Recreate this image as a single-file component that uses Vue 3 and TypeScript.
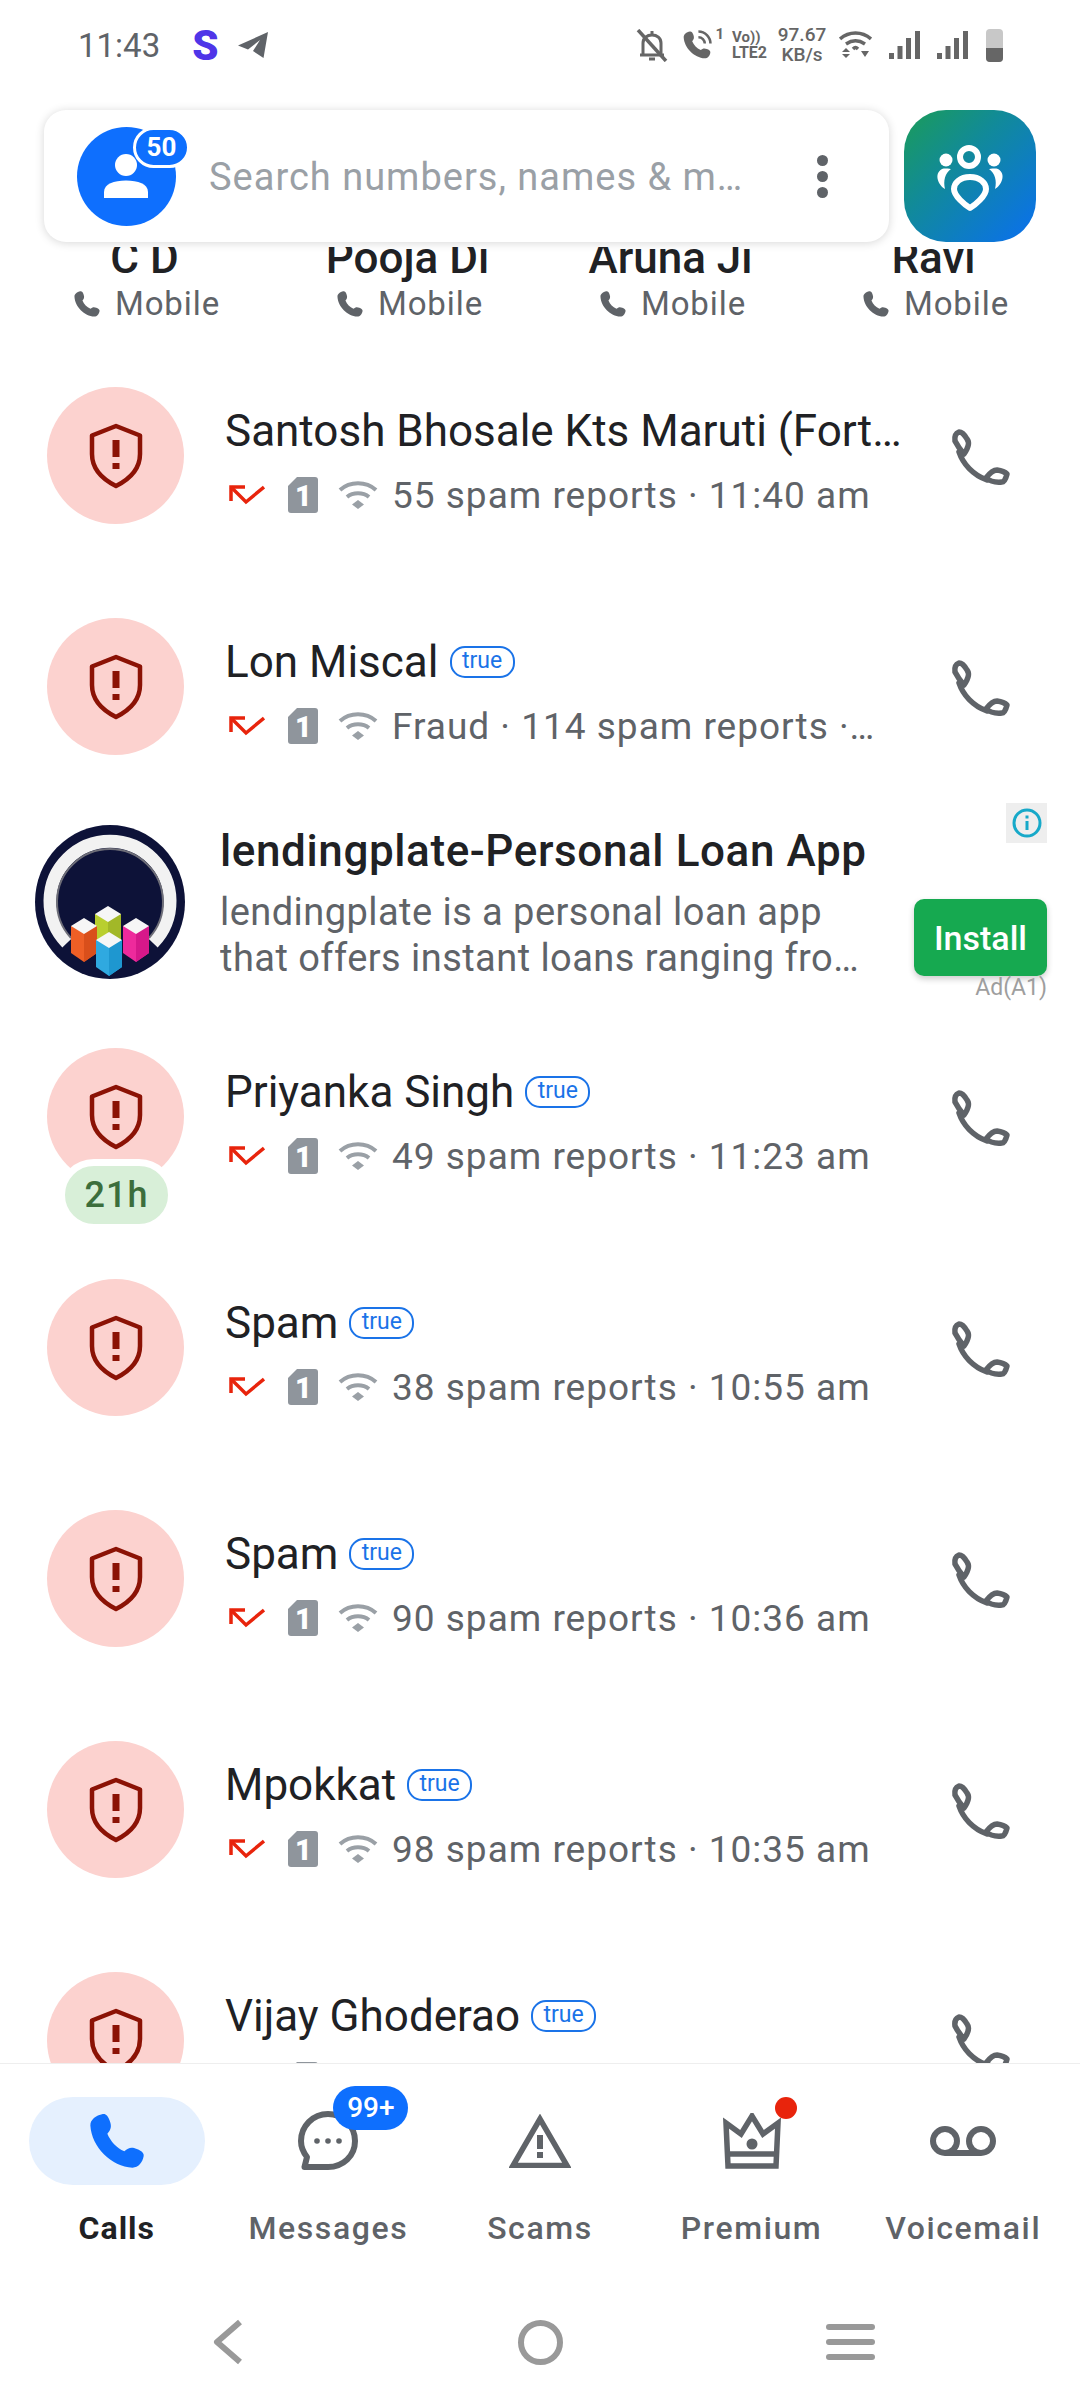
<script setup lang="ts">
interface Contact {
  name: string
}

interface CallRow {
  name: string
  detail: string
  verified?: boolean
  badge?: string
}

interface Tab {
  label: string
  active?: boolean
}

const contacts: Contact[] = [
  { name: "C D" },
  { name: "Pooja Di" },
  { name: "Aruna Ji" },
  { name: "Ravi" },
];

const topCalls: CallRow[] = [
  { name: "Santosh Bhosale Kts Maruti (Fortune Group)", detail: "55 spam reports · 11:40 am" },
  { name: "Lon Miscal", detail: "Fraud · 114 spam reports · 11:31 am", verified: true },
];

const restCalls: CallRow[] = [
  { name: "Priyanka Singh", detail: "49 spam reports · 11:23 am", verified: true, badge: "21h" },
  { name: "Spam", detail: "38 spam reports · 10:55 am", verified: true },
  { name: "Spam", detail: "90 spam reports · 10:36 am", verified: true },
  { name: "Mpokkat", detail: "98 spam reports · 10:35 am", verified: true },
  { name: "Vijay Ghoderao", detail: "72 spam reports · 10:30 am", verified: true },
];

const tabs: Tab[] = [
  { label: "Calls", active: true },
  { label: "Messages" },
  { label: "Scams" },
  { label: "Premium" },
  { label: "Voicemail" },
];

const phoneFill =
  "M7 2.5C8 2.3 8.8 3 9.5 5c.7 2 .3 3-.9 4.4 1.2 2.8 3.2 5 6 6.2 1.4-1.2 2.4-1.6 4.4-.8 2 .8 2.6 1.6 2.4 2.6-.4 2.2-1.9 4-3.9 4C10 21 3 14 2.6 6.5c0-2 1.9-3.5 4.4-4z";

const cubes = [
  { x: 88, top: 93, color: "#b9cf2f", dark: "#a2b828" },
  { x: 64, top: 105, color: "#ee5f26", dark: "#d94f1b" },
  { x: 116, top: 105, color: "#ee2a9c", dark: "#d6188a" },
  { x: 89, top: 119, color: "#2fa9e0", dark: "#1e97d0" },
];

function cubeBody(x: number, top: number) {
  return `${x - 13},${top + 8} ${x + 13},${top + 8} ${x + 13},${top + 35} ${x},${top + 44} ${x - 13},${top + 35}`;
}

function cubeSide(x: number, top: number) {
  return `${x},${top + 14} ${x + 13},${top + 8} ${x + 13},${top + 35} ${x},${top + 44}`;
}

function cubeTop(x: number, top: number) {
  return `${x},${top} ${x + 13},${top + 8} ${x},${top + 16} ${x - 13},${top + 8}`;
}
</script>

<template>
  <div class="screen">
    <div class="status-bar">
      <span class="time">11:43</span>
      <span class="s-mark">S</span>
      <svg class="plane" width="30" height="26" viewBox="0 0 30 26">
        <path d="M30 0 0 13.500 10 17.500 22 8 15 19 25.500 26z" fill="#5f6368" />
      </svg>

      <div class="status-right">
        <svg class="st-bell" width="32" height="33" viewBox="0 0 30 33" fill="none" stroke="#666" stroke-width="3">
          <path d="M6 25V14c0-5 4-8 9-8s9 3 9 8v11" />
          <path d="M3 26h24M12 30h6M15 2v4" />
          <path d="M1 1l28 31" stroke-width="3.500" />
        </svg>
        <svg class="st-call" width="34" height="34" viewBox="0 0 24 24">
          <path :d="phoneFill" fill="#666" />
          <path d="M13 6.500a4.500 4.500 0 0 1 4.500 4.500M13 2.500a8.500 8.500 0 0 1 8.500 8.500" fill="none" stroke="#666" stroke-width="1.800" />
        </svg>
        <span class="st-sim">1</span>
        <div class="st-volte">
          <span class="vo">Vo))</span>
          <span class="lte">LTE2</span>
        </div>
        <div class="st-speed">
          <span>97.67</span>
          <span>KB/s</span>
        </div>
        <svg class="st-wifi" width="33" height="28" viewBox="0 0 33 28" fill="none" stroke="#666" stroke-width="3.500">
          <path d="M1 8c9-8 22-8 31 0M7 13c6-4 13-4 19 0" />
          <path d="M14 18c2-2 3-2 5 0" />
          <path d="M7 17l4 4H3zM3 23h8l-4 4zM22 20h8l-4 6z" fill="#666" stroke="none" />
        </svg>
        <svg v-for="n in 2" :key="n" class="st-signal" width="31" height="28" viewBox="0 0 31 28" fill="#666">
          <rect x="0" y="22" width="5" height="6" />
          <rect x="8.500" y="15" width="5" height="13" />
          <rect x="17" y="7" width="5" height="21" />
          <rect x="26" y="0" width="5" height="28" />
        </svg>
        <div class="st-battery">
          <div class="st-battery-fill"></div>
        </div>
      </div>
    </div>

    <header class="top-row">
      <div class="search-card">
        <div class="profile">
          <svg width="99" height="99" viewBox="0 0 99 99">
            <circle cx="49.500" cy="49.500" r="49.500" fill="#0e6ffe" />
            <circle cx="49" cy="38" r="11" fill="#fff" />
            <path d="M27 71v-6c0-8 10-11.500 22-11.500S71 57 71 65v6z" fill="#fff" />
          </svg>
          <span class="profile-badge">50</span>
        </div>
        <span class="search-text">Search numbers, names &amp; messages</span>
        <div class="more-dots">
          <i></i><i></i><i></i>
        </div>
      </div>
      <div class="family-tile">
        <svg width="132" height="132" viewBox="0 0 132 132" fill="#fff">
          <circle cx="65" cy="47" r="9" fill="none" stroke="#fff" stroke-width="6" />
          <circle cx="42" cy="50" r="6.500" />
          <circle cx="90" cy="50" r="6.500" />
          <path d="M38 59c3-1 9 0 9 0-6 4-8 12-6 20C35 76 29 64 38 59z" />
          <path d="M94 59c-3-1-9 0-9 0 6 4 8 12 6 20 6-3 12-15 3-20z" />
          <path d="M66 67c10 0 16 6 16 12 0 7-11 16-16 19-5-3-16-12-16-19 0-6 6-12 16-12z" fill="none" stroke="#fff" stroke-width="6" stroke-linejoin="round" />
        </svg>
      </div>
    </header>

    <main class="list">
      <div class="contacts">
        <div v-for="c in contacts" :key="c.name" class="contact">
          <span class="contact-name">{{ c.name }}</span>
          <span class="contact-kind">
            <svg width="32" height="32" viewBox="0 0 24 24"><path :d="phoneFill" fill="#5f6368" /></svg>
            Mobile
          </span>
        </div>
      </div>

      <template v-for="(group, gi) in [topCalls, restCalls]" :key="gi">
        <div v-for="(row, i) in group" :key="i" class="call-row">
          <div class="avatar">
            <svg width="54" height="66" viewBox="0 0 54 66">
              <path d="M27 3 51 12.500V31C51 45 41 56 27 63 13 56 3 45 3 31V12.500z" fill="none" stroke="#8b1205" stroke-width="4.500" stroke-linejoin="round" />
              <rect x="23.500" y="17" width="7" height="17" fill="#8b1205" />
              <rect x="23.500" y="40" width="7" height="6" fill="#8b1205" />
            </svg>
            <span v-if="row.badge" class="age-badge">{{ row.badge }}</span>
          </div>
          <div class="call-text">
            <div class="name-line">
              <span class="call-name">{{ row.name }}</span>
              <span v-if="row.verified" class="true-tag">true</span>
            </div>
            <div class="detail-line">
              <svg class="arrow" width="36" height="20" viewBox="0 0 36 20" fill="none" stroke="#e8240c" stroke-width="3.500">
                <path d="M2 16V2h14" />
                <path d="M2 2l15 15L35 2" />
              </svg>
              <svg class="sim" width="30" height="36" viewBox="0 0 30 36">
                <path d="M9 0h18a3 3 0 0 1 3 3v30a3 3 0 0 1-3 3H3a3 3 0 0 1-3-3V9z" fill="#8f959c" />
                <text x="15.500" y="29" text-anchor="middle" class="sim-text">1</text>
              </svg>
              <svg class="wifi" width="40" height="28" viewBox="0 0 40 28" fill="none" stroke="#9aa0a6" stroke-width="4">
                <path d="M2 9c10-9 26-9 36 0M9 16c6-5 16-5 22 0" />
                <path d="M20 19l6 4.500-6 4.500-6-4.500z" fill="#9aa0a6" stroke="none" />
              </svg>
              <span class="detail-text">{{ row.detail }}</span>
            </div>
          </div>
          <svg class="call-btn" width="100" height="90" viewBox="0 0 100 90" fill="none" stroke="#5f6368" stroke-width="5.500" stroke-linejoin="round">
            <path d="M29 21q4 0 8 7 4 5-3 15-6-7-9-13-1-7 4-9z" />
            <path d="M56 67q6-8 11-8 7 1 10 4-2 8-5 8-10 1-16-4z" />
            <path d="M29 41c4 12 14 23 28 28" stroke-linecap="round" />
          </svg>
        </div>

        <section v-if="gi === 0" class="ad">
          <svg class="ad-logo" width="150" height="154" viewBox="15 12 150 154">
            <ellipse cx="90" cy="89" rx="75" ry="77" fill="#0d1238" />
            <path d="M47 130A60 60 0 1 1 133 130" fill="none" stroke="#f2f2f2" stroke-width="13" />
            <path d="M51 125A53 53 0 1 1 129 125" fill="none" stroke="#6e6e78" stroke-width="2" />
            <g v-for="c in cubes" :key="c.color">
              <polygon :points="cubeBody(c.x, c.top)" :fill="c.color" />
              <polygon :points="cubeSide(c.x, c.top)" :fill="c.dark" />
              <polygon :points="cubeTop(c.x, c.top)" fill="#f6f6f6" />
            </g>
          </svg>
          <div class="ad-text">
            <span class="ad-title">lendingplate-Personal Loan App</span>
            <span class="ad-desc">lendingplate is a personal loan app that offers instant loans ranging from Rs 10,000 to Rs 3,00,000</span>
          </div>
          <div class="ad-side">
            <div class="ad-info">
              <svg width="32" height="32" viewBox="0 0 32 32" fill="none" stroke="#17a9c9" stroke-width="3">
                <circle cx="16" cy="16" r="13" />
                <path d="M16 14v9" />
                <path d="M16 8.500v3" />
              </svg>
            </div>
            <button class="install">Install</button>
            <span class="ad-label">Ad(A1)</span>
          </div>
        </section>
      </template>
    </main>

    <nav class="tabbar">
      <div v-for="tab in tabs" :key="tab.label" class="tab" :class="{ active: tab.active }">
        <div class="tab-icon">
          <svg v-if="tab.label === 'Calls'" width="68" height="68" viewBox="0 0 24 24">
            <path :d="phoneFill" fill="#0e6ffe" />
          </svg>
          <template v-else-if="tab.label === 'Messages'">
            <svg width="60" height="60" viewBox="0 0 60 60" fill="none" stroke="#5f6368" stroke-width="6">
              <path d="M6.500 56 9 46C5 41 3 36 3 30 3 15 15 3 30 3s27 12 27 27-12 26-27 26z" stroke-linejoin="round" />
              <circle cx="19" cy="30" r="2.800" fill="#5f6368" stroke="none" />
              <circle cx="30" cy="30" r="2.800" fill="#5f6368" stroke="none" />
              <circle cx="41" cy="30" r="2.800" fill="#5f6368" stroke="none" />
            </svg>
            <span class="msg-badge">99+</span>
          </template>
          <svg v-else-if="tab.label === 'Scams'" width="62" height="54" viewBox="0 0 62 54" fill="none" stroke="#5f6368" stroke-width="5.500">
            <path d="M31 5 4 51.500h54z" />
            <rect x="28" y="21" width="6" height="14" fill="#5f6368" stroke="none" />
            <rect x="28" y="38" width="6" height="6" fill="#5f6368" stroke="none" />
          </svg>
          <template v-else-if="tab.label === 'Premium'">
            <svg width="58" height="56" viewBox="0 0 58 56" fill="none" stroke="#5f6368" stroke-width="5.500">
              <path d="M3 10 18 21 29 3 40 21 55 10 53 53H5z" />
              <path d="M5 41h48" />
              <circle cx="29" cy="31" r="5.500" fill="#5f6368" stroke="none" />
            </svg>
            <span class="red-dot"></span>
          </template>
          <svg v-else width="66" height="32" viewBox="0 0 66 32" fill="none" stroke="#5f6368" stroke-width="6">
            <circle cx="15" cy="16" r="12" />
            <circle cx="51" cy="16" r="12" />
            <path d="M15 28h36" />
          </svg>
        </div>
        <span class="tab-label">{{ tab.label }}</span>
      </div>
    </nav>

    <div class="system-nav">
      <svg width="30" height="46" viewBox="0 0 30 46" fill="none" stroke="#999" stroke-width="6">
        <path d="M27 3 4 23l23 20" stroke-linejoin="round" />
      </svg>
      <div class="home-ring"></div>
      <div class="menu-bars">
        <i></i><i></i><i></i>
      </div>
    </div>
  </div>
</template>

<style scoped>
.screen {
  width: 1080px;
  height: 2400px;
  display: flex;
  flex-direction: column;
  overflow: hidden;
  background: #fff;
  font-family: Roboto, "Liberation Sans", sans-serif;
  color: #202124;
}

/* status bar */
.status-bar {
  height: 110px;
  flex: none;
  display: flex;
  align-items: center;
  padding: 0 77px 20px 78px;
  box-sizing: border-box;
}

.time {
  font-size: 33px;
  color: #5f6368;
}

.s-mark {
  margin-left: 32px;
  font-size: 42px;
  font-weight: 900;
  color: #4f35e8;
}

.plane {
  margin-left: 20px;
}

.status-right {
  margin-left: auto;
  display: flex;
  align-items: center;
  color: #666;
}

.st-call {
  margin-left: 12px;
}

.st-sim {
  align-self: flex-start;
  margin-left: 1px;
  font-size: 15px;
  font-weight: 700;
}

.st-volte {
  margin-left: 8px;
  display: flex;
  flex-direction: column;
  font-weight: 700;
  line-height: 15px;
}

.vo {
  font-size: 15px;
}

.lte {
  font-size: 16px;
}

.st-speed {
  margin-left: 10px;
  width: 50px;
  display: flex;
  flex-direction: column;
  align-items: center;
  font-size: 19px;
  font-weight: 500;
  line-height: 20px;
  white-space: nowrap;
}

.st-wifi {
  margin-left: 12px;
}

.st-signal {
  margin-left: 17px;
}

.st-battery {
  margin-left: 18px;
  width: 17px;
  height: 33px;
  border-radius: 4px;
  background: #c8c8c8;
  display: flex;
  align-items: flex-end;
  overflow: hidden;
}

.st-battery-fill {
  width: 100%;
  height: 14px;
  background: #666;
}

/* search */
.top-row {
  height: 137px;
  flex: none;
  display: flex;
  align-items: flex-start;
  gap: 15px;
  padding-left: 44px;
  position: relative;
  z-index: 2;
  background: #fff;
}

.search-card {
  width: 845px;
  height: 132px;
  box-sizing: border-box;
  display: flex;
  align-items: center;
  padding-left: 33px;
  background: #fff;
  border-radius: 22px;
  box-shadow: 0 1px 10px rgba(0, 0, 0, 0.16);
}

.profile {
  position: relative;
  width: 99px;
  height: 99px;
  flex: none;
}

.profile-badge {
  position: absolute;
  top: 0;
  left: 56px;
  width: 57px;
  height: 41px;
  box-sizing: border-box;
  border: 3px solid #fff;
  border-radius: 21px;
  background: #0e6ffe;
  color: #fff;
  font-size: 26px;
  font-weight: 700;
  line-height: 35px;
  text-align: center;
}

.search-text {
  margin-left: 33px;
  width: 541px;
  white-space: nowrap;
  overflow: hidden;
  text-overflow: ellipsis;
  font-size: 38px;
  letter-spacing: 1px;
  line-height: 46px;
  padding-top: 2px;
  color: #9aa0a6;
}

.more-dots {
  margin-left: 67px;
  display: flex;
  flex-direction: column;
  gap: 5px;
}

.more-dots i {
  display: block;
  width: 11px;
  height: 11px;
  border-radius: 50%;
  background: #5f6368;
}

.family-tile {
  width: 132px;
  height: 132px;
  border-radius: 42px;
  background: linear-gradient(135deg, #1b9c58 0%, #118a9a 40%, #0a6ff0 100%);
}

/* list */
.list {
  flex: 1;
  min-height: 0;
  overflow: hidden;
}

.contacts {
  height: 108px;
  margin-top: -15px;
  display: flex;
  padding-left: 14px;
}

.contact {
  width: 263px;
  display: flex;
  flex-direction: column;
  align-items: center;
}

.contact-name {
  height: 52px;
  font-size: 44px;
  font-weight: 500;
  line-height: 52px;
  margin-left: -2px;
}

.contact-kind {
  margin-top: 0;
  display: flex;
  align-items: center;
  gap: 12px;
  font-size: 33px;
  line-height: 40px;
  letter-spacing: 0.9px;
  color: #5f6368;
}

.call-row {
  height: 231px;
  display: flex;
  align-items: center;
  padding: 0 50px 0 47px;
  box-sizing: border-box;
}

.avatar {
  position: relative;
  width: 137px;
  height: 137px;
  flex: none;
  border-radius: 50%;
  background: #fcd2cf;
  display: flex;
  align-items: center;
  justify-content: center;
}

.age-badge {
  position: absolute;
  left: 11px;
  top: 111px;
  width: 117px;
  height: 72px;
  box-sizing: border-box;
  border: 7px solid #fff;
  border-radius: 36px;
  background: #d8efd8;
  color: #3c6e3c;
  font-size: 36px;
  font-weight: 500;
  line-height: 58px;
  letter-spacing: 1px;
  text-align: center;
}

.call-text {
  margin-left: 41px;
  flex: 1;
  min-width: 0;
  padding-top: 11px;
}

.name-line {
  display: flex;
  align-items: center;
  height: 58px;
  gap: 11px;
}

.call-name {
  font-size: 44px;
  white-space: nowrap;
  overflow: hidden;
  text-overflow: ellipsis;
}

.true-tag {
  flex: none;
  width: 65px;
  height: 32px;
  box-sizing: border-box;
  border: 2px solid #1a73e8;
  border-radius: 15px;
  font-size: 23px;
  line-height: 26px;
  text-align: center;
  color: #1a73e8;
}

.detail-line {
  margin-top: 10px;
  height: 50px;
  display: flex;
  align-items: center;
  padding-right: 28px;
}

.arrow {
  margin-left: 4px;
  flex: none;
}

.sim {
  margin-left: 23px;
  flex: none;
}

.sim-text {
  font-size: 29px;
  font-weight: 900;
  fill: #fff;
}

.wifi {
  margin-left: 20px;
  flex: none;
}

.detail-text {
  margin-left: 14px;
  font-size: 37px;
  letter-spacing: 1px;
  color: #5f6368;
  white-space: nowrap;
  overflow: hidden;
  text-overflow: ellipsis;
}

.call-btn {
  flex: none;
  margin-left: 20px;
}

/* ad */
.ad {
  height: 199px;
  display: flex;
  align-items: center;
  padding: 0 33px 0 35px;
  box-sizing: border-box;
}

.ad-logo {
  flex: none;
}

.ad-text {
  margin-left: 35px;
  width: 650px;
  flex: none;
  display: flex;
  flex-direction: column;
}

.ad-title {
  font-size: 44px;
  font-weight: 500;
  letter-spacing: 0.6px;
  line-height: 56px;
  white-space: nowrap;
}

.ad-desc {
  margin-top: 10px;
  font-size: 38px;
  letter-spacing: 0.45px;
  line-height: 46px;
  color: #5f6368;
  display: -webkit-box;
  -webkit-box-orient: vertical;
  -webkit-line-clamp: 2;
  overflow: hidden;
}

.ad-side {
  margin-left: auto;
  display: flex;
  flex-direction: column;
  align-items: flex-end;
}

.ad-info {
  width: 41px;
  height: 40px;
  background: #eeeeee;
  display: flex;
  align-items: center;
  justify-content: center;
}

.install {
  margin-top: 56px;
  width: 133px;
  height: 77px;
  border: none;
  border-radius: 10px;
  background: #16a950;
  color: #fff;
  font-family: inherit;
  font-size: 34px;
  font-weight: 500;
  padding: 0;
  box-shadow: 0 3px 6px rgba(0, 0, 0, 0.2);
}

.ad-label {
  font-size: 23px;
  line-height: 24px;
  color: #9e9e9e;
}

/* bottom */
.tabbar {
  height: 227px;
  flex: none;
  box-sizing: border-box;
  border-top: 1px solid #eeeeee;
  display: flex;
  padding: 33px 11px 0;
  background: #fff;
  position: relative;
}

.tab {
  flex: 1;
  display: flex;
  flex-direction: column;
  align-items: center;
}

.tab-icon {
  position: relative;
  width: 176px;
  height: 88px;
  border-radius: 44px;
  display: flex;
  align-items: center;
  justify-content: center;
}

.tab.active .tab-icon {
  background: #e5f0fe;
}

.msg-badge {
  position: absolute;
  left: 93px;
  top: -11px;
  width: 75px;
  height: 44px;
  border-radius: 22px;
  background: #0e6ffe;
  color: #fff;
  font-size: 28px;
  font-weight: 500;
  line-height: 44px;
  text-align: center;
}

.red-dot {
  position: absolute;
  left: 111px;
  top: 0;
  width: 22px;
  height: 22px;
  border-radius: 50%;
  background: #e8240c;
}

.tab-label {
  margin-top: 23px;
  font-size: 32px;
  font-weight: 500;
  line-height: 40px;
  letter-spacing: 1.6px;
  color: #5f6368;
  white-space: nowrap;
}

.tab.active .tab-label {
  font-weight: 700;
  letter-spacing: 1px;
  color: #202124;
}

.system-nav {
  height: 110px;
  flex: none;
  display: flex;
  align-items: center;
  padding: 0 0 6px 213px;
  box-sizing: border-box;
}

.home-ring {
  margin-left: 275px;
  width: 45px;
  height: 45px;
  box-sizing: border-box;
  border: 6px solid #999;
  border-radius: 50%;
}

.menu-bars {
  margin-left: 263px;
  width: 49px;
  display: flex;
  flex-direction: column;
  gap: 9px;
}

.menu-bars i {
  display: block;
  height: 6px;
  border-radius: 3px;
  background: #999;
}
</style>
